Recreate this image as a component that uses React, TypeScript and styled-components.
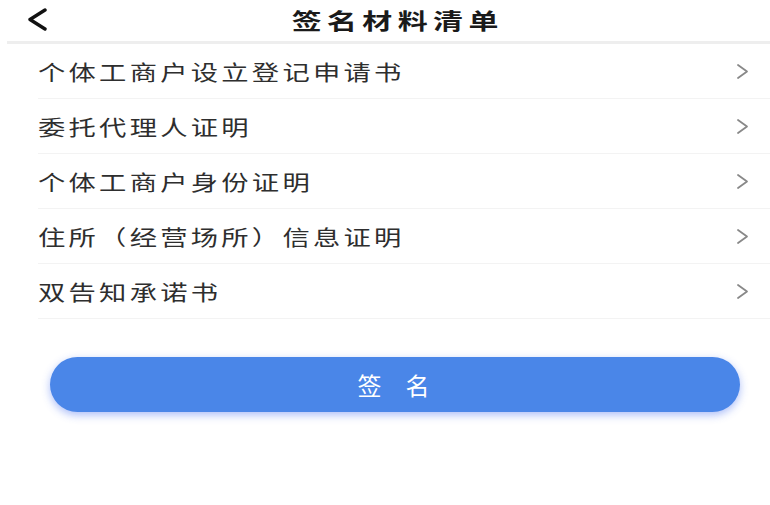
import React from 'react';
import styled, { createGlobalStyle } from 'styled-components';

const GlobalStyle = createGlobalStyle`
  body {
    margin: 0;
    background: #ffffff;
    font-family: 'Noto Sans CJK SC', 'Noto Sans', sans-serif;
  }
`;

const StyledPage = styled.div`
  width: 770px;
  height: 505px;
  background: #ffffff;
  overflow: hidden;
`;

const StyledHeader = styled.div`
  height: 41px;
  margin-left: 7px;
  display: grid;
  grid-template-columns: 60px 1fr 46px;
  align-items: start;
  border-bottom: 3px solid #eeeeee;
`;

const StyledBack = styled.div`
  display: flex;
  padding-left: 19px;
  padding-top: 8px;
`;

const StyledTitle = styled.h1`
  margin: 0;
  padding: 5px 0 0;
  text-align: center;
  font-size: 22px;
  line-height: 28px;
  font-weight: 700;
  color: #1a1a1a;
  span {
    display: inline-block;
    letter-spacing: 4px;
    padding-left: 4px;
    transform: scaleX(1.36);
  }
`;

const StyledList = styled.div`
  display: flex;
  flex-direction: column;
`;

const StyledRow = styled.div`
  height: 54px;
  margin-left: 38px;
  padding-right: 21px;
  display: flex;
  align-items: center;
  justify-content: space-between;
  border-bottom: 1px solid #f3f3f3;
  font-size: 21px;
  color: #2e2e2e;
`;

const StyledLabel = styled.span`
  display: inline-block;
  letter-spacing: 2.5px;
  transform: scaleX(1.3);
  transform-origin: left center;
`;

const StyledChevron = styled.span`
  display: flex;
  align-items: center;
`;

const StyledButtonWrap = styled.div`
  padding: 38px 30px 0 50px;
`;

const StyledButton = styled.button`
  width: 690px;
  height: 55px;
  border: none;
  border-radius: 28px;
  background: #4a86e8;
  color: #ffffff;
  font-family: 'Noto Sans CJK SC', sans-serif;
  font-size: 24px;
  letter-spacing: 24px;
  padding: 0 0 0 21px;
  box-shadow: 0 3px 8px rgba(70, 110, 240, 0.45);
`;

const items = [
  '个体工商户设立登记申请书',
  '委托代理人证明',
  '个体工商户身份证明',
  '住所（经营场所）信息证明',
  '双告知承诺书',
];

const App = () => {
  return (
    <StyledPage>
      <GlobalStyle />
      <StyledHeader>
        <StyledBack>
          <svg width="22" height="23" viewBox="0 0 22 23">
            <path d="M19 2 L4 11.5 L19 21" fill="none" stroke="#111" strokeWidth="3.4" strokeLinecap="round" strokeLinejoin="round" />
          </svg>
        </StyledBack>
        <StyledTitle>
          <span>签名材料清单</span>
        </StyledTitle>
        <div />
      </StyledHeader>
      <StyledList>
        {items.map((item) => (
          <StyledRow key={item}>
            <StyledLabel>{item}</StyledLabel>
            <StyledChevron>
              <svg width="13" height="17" viewBox="0 0 13 17">
                <path d="M2 2 L11 8.5 L2 15" fill="none" stroke="#888" strokeWidth="1.8" strokeLinecap="round" strokeLinejoin="round" />
              </svg>
            </StyledChevron>
          </StyledRow>
        ))}
      </StyledList>
      <StyledButtonWrap>
        <StyledButton>签名</StyledButton>
      </StyledButtonWrap>
    </StyledPage>
  );
};

export default App;
